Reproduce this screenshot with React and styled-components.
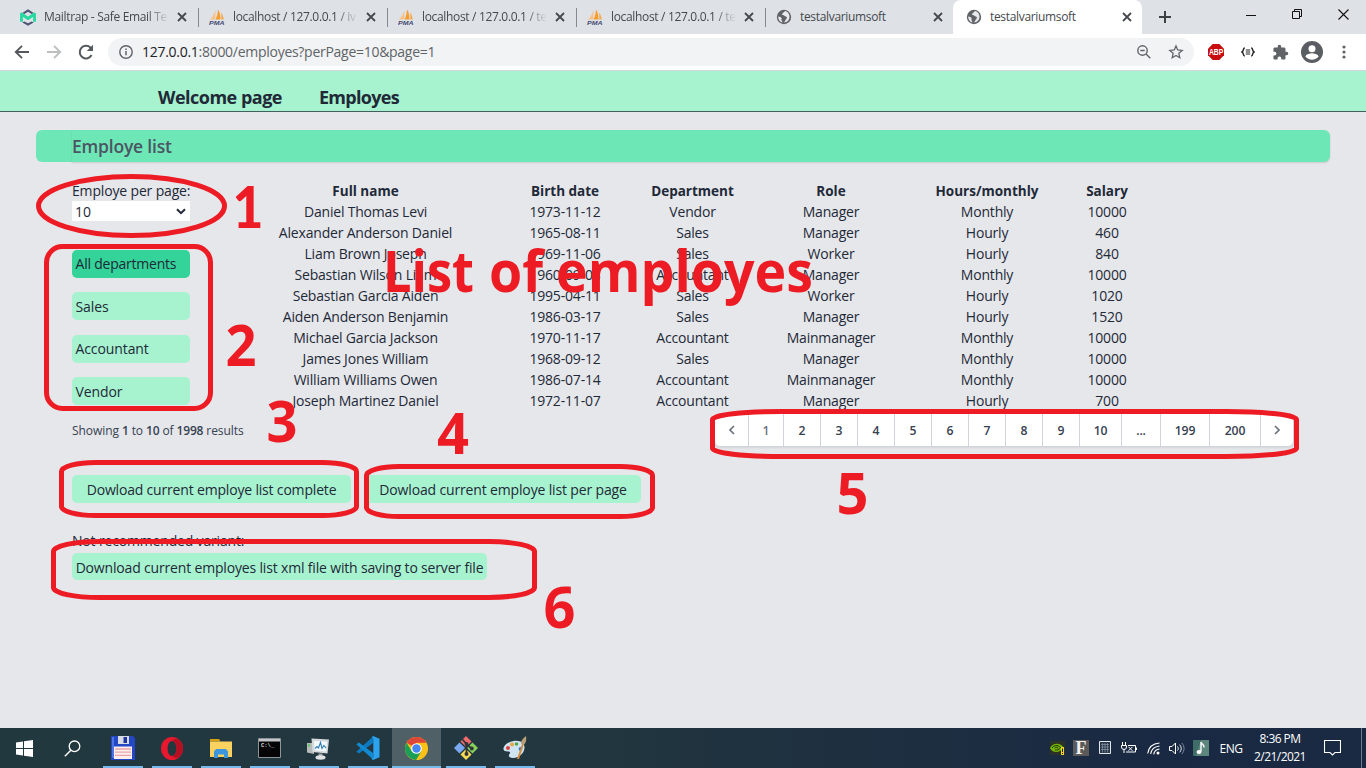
import React from 'react';
import styled, { createGlobalStyle, css } from 'styled-components';

const GlobalStyle = createGlobalStyle`
  * { box-sizing: border-box; }
  html, body { margin: 0; padding: 0; overflow: hidden; }
  body { font-family: "Open Sans", "Noto Sans", sans-serif; color: #1f2937; }
  svg { display: block; flex: none; }
`;

const Screen = styled.div`
  position: relative;
  width: 1366px;
  height: 768px;
  display: flex;
  flex-direction: column;
  overflow: hidden;
  background: #e5e7eb;
`;

/* ---------- browser chrome ---------- */
const TabStrip = styled.div`
  display: flex;
  flex: none;
  height: 34px;
  padding-left: 8px;
  background: #dee1e6;
`;

const Tab = styled.div`
  display: flex;
  align-items: center;
  width: 189px;
  height: 34px;
  padding: 0 8px 0 11px;
  color: #45494d;
  border-left: 1px solid transparent;
  ${p => p.$divided && css`
    background: linear-gradient(#85888c, #85888c) 0 8px / 1px 19px no-repeat;
  `}
  ${p => p.$active && css`
    padding-left: 12px;
    background: #fff;
    border-radius: 8px 8px 0 0;
  `}
`;

const TabTitle = styled.span`
  flex: 1;
  margin: 0 6px 0 8px;
  font-size: 12px;
  letter-spacing: -0.33px;
  line-height: 18px;
  white-space: nowrap;
  overflow: hidden;
  ${p => p.$fade && css`
    mask-image: linear-gradient(90deg, #000 calc(100% - 22px), transparent 100%);
  `}
`;

const NewTab = styled.div`
  display: flex;
  align-items: center;
  justify-content: center;
  width: 46px;
`;

const WindowControls = styled.div`
  display: flex;
  margin-left: auto;
  height: 29px;
`;

const WindowButton = styled.div`
  display: flex;
  align-items: center;
  justify-content: center;
  width: 46px;
`;

const Toolbar = styled.div`
  display: flex;
  align-items: center;
  flex: none;
  height: 37px;
  background: #fff;
  border-bottom: 1px solid #d5d8dc;
`;

const NavButtons = styled.div`
  display: flex;
  align-items: center;
  gap: 14px;
  width: 108px;
  padding-left: 13px;
`;

const AddressBar = styled.div`
  display: flex;
  align-items: center;
  width: 1086px;
  height: 28px;
  padding: 0 10px;
  border-radius: 14px;
  background: #f1f3f4;
`;

const Url = styled.span`
  flex: 1;
  margin-left: 8px;
  font-size: 14px;
  letter-spacing: -0.28px;
  line-height: 20px;
  color: #5f6368;
  b { font-weight: 400; color: #202124; }
`;

const AddressActions = styled.div`
  display: flex;
  align-items: center;
  gap: 16px;
`;

const Extensions = styled.div`
  display: flex;
  align-items: center;
  padding-left: 6px;
`;

const ExtensionSlot = styled.div`
  display: flex;
  align-items: center;
  justify-content: center;
  width: 32px;
`;

/* ---------- web page ---------- */
const SiteHeader = styled.nav`
  display: flex;
  flex: none;
  gap: 37px;
  height: 41px;
  padding: 14px 0 0 158px;
  background: #a7f3d0;
  border-bottom: 1px solid #42605f;
`;

const NavLink = styled.a`
  font-size: 18px;
  font-weight: 700;
  line-height: 25px;
  letter-spacing: ${p => p.$ls};
  color: #1f2937;
`;

const Page = styled.main`
  flex: 1;
  padding: 18px 36px 0;
`;

const TitleBar = styled.div`
  height: 32px;
  padding-left: 36px;
  border-radius: 6px;
  background: #6ee7b7;
`;

const Title = styled.h1`
  height: 32px;
  margin: 0;
  border-radius: 0 6px 6px 0;
  box-shadow: 0 1px 2px rgba(0, 0, 0, 0.12);
  font-size: 17.5px;
  font-weight: 600;
  line-height: 33px;
  letter-spacing: -0.2px;
  color: #4b5563;
`;

const Content = styled.div`
  display: flex;
  height: 230px;
  padding: 19px 0 0 36px;
`;

const Sidebar = styled.aside`
  width: 118px;
  margin-right: 51px;
`;

const FieldLabel = styled.div`
  height: 20px;
  font-size: 14px;
  line-height: 20px;
  letter-spacing: -0.16px;
  white-space: nowrap;
`;

const PerPage = styled.div`
  display: flex;
  align-items: center;
  justify-content: space-between;
  height: 20px;
  margin-bottom: 29px;
  padding: 1px 4px 0 3px;
  background: #fff;
  font-size: 14px;
  line-height: 20px;
`;

const Departments = styled.div`
  display: flex;
  flex-direction: column;
  gap: 14.33px;
`;

const Department = styled.button`
  height: 28px;
  padding: ${p => p.$drop}px 0 0 3.5px;
  border: 0;
  border-radius: 5px;
  background: ${p => (p.$selected ? '#34d399' : '#a7f3d0')};
  font: 14px/20px "Open Sans", sans-serif;
  letter-spacing: ${p => (p.$selected ? '-0.22px' : '-0.1px')};
  text-align: left;
  white-space: nowrap;
  color: #1f2937;
`;

const Table = styled.div`
  display: grid;
  grid-template-columns: 249px 150px 105px 172px 140px 100px;
  grid-auto-rows: 21px;
  align-content: start;
`;

const Cell = styled.div`
  text-align: center;
  font-size: ${p => (p.$head ? '13.5px' : '14px')};
  font-weight: ${p => (p.$head ? 700 : 400)};
  letter-spacing: ${p => (p.$head ? '0px' : '-0.19px')};
  line-height: ${p => (p.$head ? 21 : 19)}px;
  white-space: nowrap;
`;

const PagerRow = styled.div`
  display: flex;
  align-items: flex-start;
  justify-content: space-between;
  height: 34px;
  margin-top: 21px;
  padding: 0 36px;
`;

const Summary = styled.p`
  margin: 9px 0 0;
  font-size: 12px;
  line-height: 18px;
  letter-spacing: -0.07px;
  color: #374151;
  b { font-weight: 600; letter-spacing: -0.2px; }
`;

const Pager = styled.div`
  display: flex;
  height: 34px;
  border: 1px solid #d1d5db;
  border-radius: 6px;
  background: #fff;
  box-shadow: 0 1px 2px rgba(0, 0, 0, 0.08);
`;

const PageLink = styled.span`
  display: flex;
  align-items: center;
  justify-content: center;
  width: ${p => p.$w}px;
  border-right: 1px solid #d1d5db;
  font-size: 12.2px;
  font-weight: 600;
  letter-spacing: -0.2px;
  color: ${p => (p.$muted ? '#6b7280' : '#374151')};
  &:last-child { border-right: 0; }
`;

const Downloads = styled.div`
  display: flex;
  gap: 14px;
  padding: 28px 0 0 36px;
`;

const DownloadButton = styled.button`
  width: ${p => p.$w}px;
  height: ${p => p.$h || 28}px;
  padding: ${p => p.$drop || 1}px 0 0;
  border: 0;
  border-radius: 5px;
  background: #a7f3d0;
  font: 14px/20px "Open Sans", sans-serif;
  letter-spacing: ${p => p.$ls};
  text-align: center;
  white-space: nowrap;
  color: #1f2937;
`;

const Fallback = styled.section`
  padding: 28px 0 0 36px;
`;

const FallbackNote = styled.p`
  margin: 0 0 2px;
  font-size: 14px;
  line-height: 20px;
  letter-spacing: -0.17px;
`;

const Annotations = styled.svg`
  position: absolute;
  left: 0;
  top: 0;
  pointer-events: none;
`;

const Mark = styled.text`
  font-family: ${p => (p.$footed ? 'Lato, sans-serif' : '"Open Sans", sans-serif')};
  font-weight: ${p => (p.$footed ? 900 : 700)};
  font-size: 56.5px;
  fill: #ed1c24;
`;

/* ---------- taskbar ---------- */
const Taskbar = styled.footer`
  display: flex;
  flex: none;
  height: 40px;
  background: linear-gradient(90deg, #22383f 0%, #22373f 40%, #1d2f40 65%, #1a2943 85%, #1a2a42 100%);
`;

const TaskSlot = styled.div`
  display: flex;
  align-items: center;
  justify-content: center;
  width: 49px;
  height: 40px;
  padding-right: ${p => p.$nudge || 0}px;
  ${p => p.$running && css`
    background: linear-gradient(#76b9ed, #76b9ed) center bottom / 40px 2px no-repeat;
  `}
  ${p => p.$current && css`
    background: linear-gradient(#76b9ed, #76b9ed) left bottom / 100% 2px no-repeat, #4f6067;
  `}
`;

const Tray = styled.div`
  display: flex;
  align-items: center;
  margin-left: auto;
  color: #fff;
`;

const TraySlot = styled.div`
  display: flex;
  align-items: center;
  justify-content: center;
  width: ${p => p.$w || 24}px;
  height: 40px;
`;

const Language = styled(TraySlot)`
  font-size: 12px;
  letter-spacing: -0.55px;
`;

const Clock = styled.div`
  width: 62px;
  font-size: 12px;
  line-height: 18px;
  letter-spacing: -0.55px;
  text-align: center;
  white-space: nowrap;
`;

const Edge = styled.div`
  width: 5px;
  height: 40px;
  margin-left: 7px;
  border-left: 1px solid #6f7c8c;
`;

const LetterTile = styled.span`
  width: 16px;
  height: 16px;
  background: #5a5a5a;
  color: #f0f0f0;
  font: 700 18px/16px "Liberation Serif", serif;
  text-align: center;
`;

/* ---------- icons ---------- */
const MailtrapIcon = () => (
  <svg width="16" height="17" viewBox="0 0 16 17">
    <path d="M2.300 4 8 .3 13.700 4l-2 1L8 2.800 4.300 5z M2.300 13.400 8 16.700l5.700-3.300-2-1L8 14.200l-3.700-1.800z" fill="#4b5573" />
    <path d="M1.500 12.800V5l6.500 4.500L14.500 5v7.800" fill="none" stroke="#22d9a0" strokeWidth="2.800" strokeLinejoin="round" />
  </svg>
);

const PmaIcon = () => (
  <svg width="16" height="17" viewBox="0 0 16 17">
    <path d="M6.600 1 6.200 10.500H.8C3.500 8.500 5.200 5 6.600 1z" fill="#f6c28a" />
    <path d="M9 .5c2 3 2.600 6.500 2.400 10H6.600C8 7.500 8.800 4 9 .5z" fill="#f89c2c" />
    <path d="M12 3.500c1.600 2 2.600 4.500 2.800 7h-2.600c.3-2.300.2-4.700-.2-7z" fill="#f7a94b" />
    <text x="0" y="16.300" fontFamily="Liberation Sans" fontSize="6.200" fontWeight="700" fontStyle="italic" fill="#444a73" textLength="15.500" lengthAdjust="spacingAndGlyphs">PMA</text>
  </svg>
);

const GlobeIcon = () => (
  <svg width="16" height="16" viewBox="0 0 16 16">
    <circle cx="8" cy="8" r="7.200" fill="#5f6368" />
    <path d="M9.200 2.100c-.4.900-1.800.7-1.900 1.700-.1.900-1.600.7-1.500 1.700.2.900 2 .3 2.600 1.200.7 1 2.300.5 2.500 1.800.2 1.400-1.300 1.500-1.500 2.700-.2 1.100-1.100 1.700-1.900 2.300 4-.1 6-2.700 6-5.700 0-2.700-1.800-5-4.300-5.700z M2.200 7.200c1 .7 2.700.6 3.300 1.700.4 1-.5 1.500 0 2.400.3.700 1 1.100.8 2.100C3.800 12.700 2 10.500 2.200 7.200z" fill="#e7e9ec" />
  </svg>
);

const CloseIcon = () => (
  <svg width="14" height="14" viewBox="0 0 14 14">
    <path d="m3 3 8 8M11 3l-8 8" stroke="#45494d" strokeWidth="1.800" />
  </svg>
);

const PlusIcon = () => (
  <svg width="14" height="14" viewBox="0 0 14 14"><path d="M7 1v12M1 7h12" stroke="#3c4043" strokeWidth="2" /></svg>
);

const MinimizeIcon = () => (
  <svg width="10" height="10" viewBox="0 0 10 10"><path d="M0 5.500h10" stroke="#111" /></svg>
);

const RestoreIcon = () => (
  <svg width="11" height="11" viewBox="0 0 11 11"><path d="M.5 2.500h7v7h-7zM2.500 2.500v-2h7v7h-2" fill="none" stroke="#111" /></svg>
);

const WinCloseIcon = () => (
  <svg width="11" height="11" viewBox="0 0 11 11"><path d="m.5.5 10 10M10.500.5l-10 10" stroke="#111" strokeWidth="1.100" /></svg>
);

const ArrowIcon = ({ forward }) => (
  <svg width="18" height="18" viewBox="0 0 18 18">
    <path d={forward ? 'M2 9h13M9 2.800 15.200 9 9 15.200' : 'M16 9H3M9 2.800 2.800 9 9 15.200'} fill="none" stroke={forward ? '#bcbec0' : '#55595e'} strokeWidth="1.900" />
  </svg>
);

const ReloadIcon = () => (
  <svg width="18" height="18" viewBox="0 0 18 18">
    <path d="M14.600 12.100A6.300 6.300 0 1 1 13.400 4.500L15 6" fill="none" stroke="#55595e" strokeWidth="2" />
    <path d="M16 1.800v6.200H9.800z" fill="#55595e" />
  </svg>
);

const InfoIcon = () => (
  <svg width="16" height="16" viewBox="0 0 16 16">
    <circle cx="8" cy="8" r="6.200" fill="none" stroke="#5f6368" strokeWidth="1.400" />
    <path d="M8 7v4.300M8 4.500V6" stroke="#5f6368" strokeWidth="1.500" />
  </svg>
);

const ZoomOutIcon = () => (
  <svg width="16" height="16" viewBox="0 0 16 16">
    <circle cx="6.500" cy="6.500" r="4.700" fill="none" stroke="#5f6368" strokeWidth="1.400" />
    <path d="m10 10 4.300 4.300M4.300 6.500h4.400" stroke="#5f6368" strokeWidth="1.400" />
  </svg>
);

const StarIcon = () => (
  <svg width="16" height="16" viewBox="0 0 16 16">
    <path d="m8 1.900 1.700 4.100 4.500.4-3.400 2.900 1 4.400L8 11.400l-3.800 2.300 1-4.400L1.800 6.400l4.500-.4z" fill="none" stroke="#5f6368" strokeWidth="1.300" />
  </svg>
);

const AbpIcon = () => (
  <svg width="16" height="16" viewBox="0 0 16 16">
    <path d="M4.700 0h6.600L16 4.700v6.600L11.300 16H4.700L0 11.300V4.700z" fill="#c70d0d" />
    <text x=".9" y="11" fontFamily="Liberation Sans" fontSize="8.600" fontWeight="700" fill="#fff" textLength="14.400" lengthAdjust="spacingAndGlyphs">ABP</text>
  </svg>
);

const BracesIcon = () => (
  <svg width="14" height="10" viewBox="0 0 14 10">
    <path d="M3.800 1C1.600 1 3 4.400 1 5c2 .6.6 4 2.800 4M10.200 1c2.200 0 .8 3.400 2.800 4-2 .6-.6 4-2.800 4" fill="none" stroke="#222" strokeWidth="1.500" />
    <path d="M4.800 3h4.400M4.800 5h4.400M4.800 7h4.400" stroke="#222" strokeWidth="1" />
  </svg>
);

const PuzzleIcon = () => (
  <svg width="17" height="17" viewBox="0 0 24 24">
    <path d="M20.500 11H19V7c0-1.100-.9-2-2-2h-4V3.500a2.500 2.500 0 0 0-5 0V5H4c-1.100 0-2 .9-2 2v3.800h1.500a2.700 2.700 0 0 1 0 5.400H2V20c0 1.100.9 2 2 2h3.800v-1.500a2.700 2.700 0 0 1 5.400 0V22H17c1.100 0 2-.9 2-2v-4h1.500a2.500 2.500 0 0 0 0-5z" fill="#5f6368" />
  </svg>
);

const ProfileIcon = () => (
  <svg width="22" height="22" viewBox="0 0 22 22">
    <circle cx="11" cy="11" r="11" fill="#5a5e63" />
    <circle cx="11" cy="7.700" r="3.500" fill="#fff" />
    <path d="M4.300 15.200c1.400-2.200 4.500-3 6.700-3s5.300.8 6.700 3a8 8 0 0 1-13.400 0z" fill="#fff" />
  </svg>
);

const MenuIcon = () => (
  <svg width="4" height="14" viewBox="0 0 4 14" fill="#5f6368">
    <circle cx="2" cy="2" r="1.600" /><circle cx="2" cy="7" r="1.600" /><circle cx="2" cy="12" r="1.600" />
  </svg>
);

const SelectArrow = () => (
  <svg width="10" height="7" viewBox="0 0 10 7"><path d="m1 1.200 4 4 4-4" fill="none" stroke="#1f2937" strokeWidth="2" /></svg>
);

const Chevron = ({ right }) => (
  <svg width="8" height="10" viewBox="0 0 8 10">
    <path d={right ? 'm2 1 4 4-4 4' : 'M6 1 2 5l4 4'} fill="none" stroke="#6b7280" strokeWidth="1.700" />
  </svg>
);

const WindowsIcon = () => (
  <svg width="17" height="17" viewBox="0 0 17 17" fill="#fff">
    <path d="M0 2.500 7 1.500V8H0zM8 1.300 17 0v8H8zM0 9h7v6.500l-7-1zM8 9h9v8l-9-1.300z" />
  </svg>
);

const SearchIcon = () => (
  <svg width="17" height="17" viewBox="0 0 17 17">
    <circle cx="10.500" cy="6.300" r="5.300" fill="none" stroke="#fff" strokeWidth="1.300" />
    <path d="m6.800 10.200-6 6" stroke="#fff" strokeWidth="1.400" />
  </svg>
);

const FloppyIcon = () => (
  <svg width="24" height="24" viewBox="0 0 24 24">
    <path d="M0 0h22l2 2v22H0z" fill="#2347c5" />
    <path d="M1 1h2v21H1z" fill="#4c74e4" />
    <path d="M7 0h11v8H7z" fill="#d9dce2" />
    <path d="M12.500 1H16v6h-3.500z" fill="#2038a0" />
    <path d="M3 10.500h18V23H3z" fill="#fdeeee" />
    <path d="M4 13h16M4 16.200h16M4 19.400h16" stroke="#e9a5aa" strokeWidth="1.300" />
  </svg>
);

const OperaIcon = () => (
  <svg width="22" height="23" viewBox="0 0 22 23">
    <path fillRule="evenodd" d="M11 0a11 11.500 0 1 0 0 23 11 11.500 0 0 0 0-23zm0 4c2.600 0 4.400 3.300 4.400 7.500S13.600 19 11 19s-4.400-3.300-4.400-7.500S8.400 4 11 4z" fill="#e8192f" />
    <path d="M11 4c2.600 0 4.400 3.300 4.400 7.500S13.600 19 11 19c3 2.500 5.500 2.300 7.800.6A11 11.500 0 0 0 18.600 3.200C15.900 1.500 13.500 1.700 11 4z" fill="#b51022" />
  </svg>
);

const FolderIcon = () => (
  <svg width="22" height="19" viewBox="0 0 22 19">
    <path d="M0 0h9l1.500 2.500H0z" fill="#d9a014" />
    <path d="M0 2.500h22V18H0z" fill="#fbd260" />
    <path d="M4 19v-6.500L6 10h10l2 2.500V19h-4v-3.500H8V19z" fill="#3b97dd" />
  </svg>
);

const TerminalIcon = () => (
  <svg width="23" height="20" viewBox="0 0 23 20">
    <path d="M.5.5h22v19H.5z" fill="#050505" stroke="#8e9498" />
    <path d="M1 1h21v2.500H1z" fill="#c3c7ca" />
    <text x="3" y="9.300" fontFamily="Liberation Mono" fontSize="5.500" fontWeight="700" fill="#ddd">C:\_</text>
  </svg>
);

const MonitorIcon = () => (
  <svg width="23" height="23" viewBox="0 0 23 23">
    <path d="M0 6h7v11l-7-1.500z" fill="#b6babb" />
    <path d="M1 7.500h2v2H1z" fill="#4cc94c" />
    <path d="M4.500 1.500 22 2.500l-1.500 14L5.500 15z" fill="#d5d9dc" />
    <path d="M7 4l13 .8-1 9.700L7.500 13.300z" fill="#f4fbff" />
    <path d="m8 11.500 2-2 1.500 1.500 2-5.500 1.500 6 2-3 2 2.500" fill="none" stroke="#2a7db5" strokeWidth="1.100" />
    <path d="M11.500 16.500h4v2.500h-4z" fill="#9ea4a8" />
    <ellipse cx="13.500" cy="20.500" rx="5" ry="2.200" fill="#e0e2e3" />
  </svg>
);

const CodeIcon = () => (
  <svg width="24" height="24" viewBox="0 0 24 24">
    <path d="M.3 15.800 17 .4V7L3 17.600z" fill="#0d79bf" />
    <path d="M.3 8.200 17 23.600V17L3 6.400z" fill="#1389d1" />
    <path d="M17 0l6.500 2.800v18.400L17 24l-1.500-1.200 1.800-1V2.500l-1.500-1.200z" fill="#2ca3ee" />
  </svg>
);

const ChromeIcon = () => (
  <svg width="23" height="23" viewBox="0 0 24 24">
    <circle cx="12" cy="12" r="12" fill="#fbc116" />
    <path d="M12 12 1.600 6A12 12 0 0 1 22.400 6H12z" fill="#de4638" />
    <path d="M1.600 6a12 12 0 0 0 10 18l5.500-9.300L7 14.900z" fill="#1a9f56" />
    <circle cx="12" cy="12" r="5.600" fill="#fff" />
    <circle cx="12" cy="12" r="4.400" fill="#4486f4" />
  </svg>
);

const GitIcon = () => (
  <svg width="24" height="24" viewBox="0 0 24 24">
    <path d="m12 0 5.500 5.500L12 11 6.500 5.500z" fill="#ee6b6b" />
    <path d="M5.500 6.500 11 12l-5.500 5.500L0 12z" fill="#7aa9f2" />
    <path d="M18.500 6.500 24 12l-5.500 5.500L13 12z" fill="#86d25a" />
    <path d="m12 13 5.500 5.500L12 24l-5.500-5.500z" fill="#fbdc55" />
    <path d="M8.500 3.500 12.500 8v9.500M12.500 8l5 4.500" fill="none" stroke="#2f3336" strokeWidth="1.800" />
    <circle cx="12.500" cy="8" r="1.900" fill="#2f3336" /><circle cx="12.500" cy="18" r="2" fill="#2f3336" /><circle cx="17.800" cy="12.500" r="1.900" fill="#2f3336" />
  </svg>
);

const PaintIcon = () => (
  <svg width="24" height="24" viewBox="0 0 24 24">
    <path d="M10.500 5C17 3.500 22 7 21.500 12c-.5 5.500-5.500 10-11.500 10-4 0-5-2.500-3.500-4 1.300-1.400.3-2.500-1.500-2.500-3 0-5-1-4.500-3.500C1.200 8.500 5.500 6 10.500 5z" fill="#cfe4f3" />
    <circle cx="5" cy="12" r="2" fill="#d94141" /><circle cx="9" cy="8.500" r="1.900" fill="#e9a33b" />
    <circle cx="13.500" cy="8" r="1.800" fill="#53a84f" /><circle cx="17.500" cy="13" r="1.900" fill="#3e76c9" />
    <path d="m14 23 5-15 1.800.6L16 23z" fill="#d98b3a" />
    <path d="M18 7.500C18 4 20 2.500 23 0c.6 3.500.3 6.500-2.200 9z" fill="#b99e78" />
  </svg>
);

const NvidiaIcon = () => (
  <svg width="16" height="16" viewBox="0 0 16 16">
    <path d="M1 1h15v14H1z" fill="#2b3328" />
    <path d="M1 8c2-3.500 5.500-4.600 8.500-4 2.500.4 4 2 5 3.500-2 3-5 4.800-8 4.500C4 11.700 2 10 1 8z" fill="#76b900" />
    <path d="M3 8c2-2.500 4.500-3 6.500-2 1 .5 1.500 1 2 1.700C10 9.500 8 10.500 6 10M5.500 8.300c1-1.200 2.500-1.200 3.500-.2" fill="none" stroke="#1d2c10" strokeWidth="1" />
    <path d="M12 7h3v8h-3z" fill="#f2d224" />
    <path d="M13.500 8.500v3.500M13.500 13v1" stroke="#222" />
  </svg>
);

const GridIcon = () => (
  <svg width="12" height="14" viewBox="0 0 12 14">
    <path d="M.5.5h11v12H.5z" fill="#26374b" stroke="#e4e7ea" />
    <path d="M3.500 2v9.500M6 2v9.500M8.500 2v9.500M2 3.500h8M2 6h8M2 8.500h8" stroke="#8996a5" strokeWidth=".7" />
  </svg>
);

const BatteryIcon = () => (
  <svg width="16" height="12" viewBox="0 0 16 12" fill="none" stroke="#fff">
    <path d="M1.500 0v3M4.500 0v3M.5 3.500h5v1.500a2.500 2.500 0 0 1-5 0zM3 7.500V11" />
    <path d="M7 3.500h7.500v6.500H5M15.500 5.500v2.500M7.500 4.800l4 4M11.500 4.800l-4 4" />
  </svg>
);

const WifiIcon = () => (
  <svg width="13" height="13" viewBox="0 0 13 13" fill="none" stroke="#fff">
    <path d="M.7 11.500C1.500 5.500 6 1.500 12.500 1M3.700 12C4.300 7.500 7.500 4.600 12.500 4M6.700 12.300c.5-3 2.500-5 5.800-5.300" strokeWidth="1.100" />
    <circle cx="11" cy="11" r="1.500" fill="#fff" stroke="none" />
  </svg>
);

const SpeakerIcon = () => (
  <svg width="16" height="13" viewBox="0 0 16 13" fill="none" stroke="#fff">
    <path d="M.5 4.500h2.500L6.500 1v11L3 8.500H.5z" />
    <path d="M8.500 4.500c1 1.200 1 2.800 0 4M10.700 2.700c2 2.200 2 5.400 0 7.600" />
    <path d="M12.800 1c3 3.200 3 7.800 0 11" stroke="#7d8a9a" />
  </svg>
);

const MusicIcon = () => (
  <svg width="16" height="16" viewBox="0 0 16 16">
    <path d="M0 0h16v16H0z" fill="#3f6d68" /><path d="M8 0h8v16H3z" fill="#5d877d" />
    <path d="M8 2v9.500M8 2c.5 2.500 3.500 2.500 3 5.500" fill="none" stroke="#fff" strokeWidth="1.400" />
    <ellipse cx="6" cy="12" rx="2.500" ry="2" fill="#fff" />
  </svg>
);

const NotificationIcon = () => (
  <svg width="17" height="16" viewBox="0 0 17 16"><path d="M.5.500h16v12h-5.500L8.500 15 6 12.500H.5z" fill="none" stroke="#fff" strokeWidth="1.100" /></svg>
);

/* ---------- data ---------- */
const tabs = [
  { title: 'Mailtrap - Safe Email Te', icon: MailtrapIcon, fade: true },
  { title: 'localhost / 127.0.0.1 / iv', icon: PmaIcon, fade: true },
  { title: 'localhost / 127.0.0.1 / te', icon: PmaIcon, fade: true },
  { title: 'localhost / 127.0.0.1 / te', icon: PmaIcon, fade: true },
  { title: 'testalvariumsoft', icon: GlobeIcon },
  { title: 'testalvariumsoft', icon: GlobeIcon, active: true },
];

const columns = ['Full name', 'Birth date', 'Department', 'Role', 'Hours/monthly', 'Salary'];

const employees = [
  ['Daniel Thomas Levi', '1973-11-12', 'Vendor', 'Manager', 'Monthly', '10000'],
  ['Alexander Anderson Daniel', '1965-08-11', 'Sales', 'Manager', 'Hourly', '460'],
  ['Liam Brown Joseph', '1969-11-06', 'Sales', 'Worker', 'Hourly', '840'],
  ['Sebastian Wilson Liam', '1960-09-08', 'Accountant', 'Manager', 'Monthly', '10000'],
  ['Sebastian Garcia Aiden', '1995-04-11', 'Sales', 'Worker', 'Hourly', '1020'],
  ['Aiden Anderson Benjamin', '1986-03-17', 'Sales', 'Manager', 'Hourly', '1520'],
  ['Michael Garcia Jackson', '1970-11-17', 'Accountant', 'Mainmanager', 'Monthly', '10000'],
  ['James Jones William', '1968-09-12', 'Sales', 'Manager', 'Monthly', '10000'],
  ['William Williams Owen', '1986-07-14', 'Accountant', 'Mainmanager', 'Monthly', '10000'],
  ['Joseph Martinez Daniel', '1972-11-07', 'Accountant', 'Manager', 'Hourly', '700'],
];

const pages = [
  ['1', 35], ['2', 37], ['3', 37], ['4', 37], ['5', 37], ['6', 37], ['7', 37],
  ['8', 37], ['9', 37], ['10', 42], ['...', 39], ['199', 49], ['200', 51],
];

const tasks = [FloppyIcon, OperaIcon, FolderIcon, TerminalIcon, MonitorIcon, CodeIcon, ChromeIcon, GitIcon, PaintIcon];

/* text, x, baseline, advance width */
const marks = [
  ['1', 232.500, 228, 31], ['2', 225.500, 366, 31], ['3', 266.500, 442, 31], ['4', 437, 454, 32],
  ['5', 836.500, 514, 32], ['6', 543.500, 628, 32],
  ['List', 383, 292, 91], ['of', 489, 292, 54], ['employes', 556, 292, 257],
];

/* A hand-drawn frame: straight edges with flattened elliptical corners. */
const Frame = ({ x, y, w, h, rx, ry }) => (
  <rect x={x + 2.500} y={y + 2.500} width={w - 5} height={h - 5} rx={rx} ry={ry} />
);

export default function App() {
  return (
    <Screen>
      <GlobalStyle />
      <TabStrip>
        {tabs.map((t, i) => (
          <Tab key={i} $active={t.active} $divided={i > 0 && !t.active}>
            <t.icon />
            <TabTitle $fade={t.fade}>{t.title}</TabTitle>
            <CloseIcon />
          </Tab>
        ))}
        <NewTab><PlusIcon /></NewTab>
        <WindowControls>
          <WindowButton><MinimizeIcon /></WindowButton>
          <WindowButton><RestoreIcon /></WindowButton>
          <WindowButton><WinCloseIcon /></WindowButton>
        </WindowControls>
      </TabStrip>
      <Toolbar>
        <NavButtons><ArrowIcon /><ArrowIcon forward /><ReloadIcon /></NavButtons>
        <AddressBar>
          <InfoIcon />
          <Url><b>127.0.0.1</b>:8000/employes?perPage=10&amp;page=1</Url>
          <AddressActions><ZoomOutIcon /><StarIcon /></AddressActions>
        </AddressBar>
        <Extensions>
          <ExtensionSlot><AbpIcon /></ExtensionSlot>
          <ExtensionSlot><BracesIcon /></ExtensionSlot>
          <ExtensionSlot><PuzzleIcon /></ExtensionSlot>
          <ExtensionSlot><ProfileIcon /></ExtensionSlot>
          <ExtensionSlot><MenuIcon /></ExtensionSlot>
        </Extensions>
      </Toolbar>

      <SiteHeader>
        <NavLink $ls="-0.5px">Welcome page</NavLink>
        <NavLink $ls="-0.7px">Employes</NavLink>
      </SiteHeader>
      <Page>
        <TitleBar><Title>Employe list</Title></TitleBar>
        <Content>
          <Sidebar>
            <FieldLabel>Employe per page:</FieldLabel>
            <PerPage>10<SelectArrow /></PerPage>
            <Departments>
              <Department $selected $drop={0}>All departments</Department>
              <Department $drop={1}>Sales</Department>
              <Department $drop={1}>Accountant</Department>
              <Department $drop={2}>Vendor</Department>
            </Departments>
          </Sidebar>
          <Table>
            {columns.map(c => <Cell key={c} $head>{c}</Cell>)}
            {employees.flatMap((row, r) => row.map((v, c) => <Cell key={`${r}-${c}`}>{v}</Cell>))}
          </Table>
        </Content>
        <PagerRow>
          <Summary>Showing <b>1</b> to <b>10</b> of <b>1998</b> results</Summary>
          <Pager>
            <PageLink $w={34} $muted><Chevron /></PageLink>
            {pages.map(([label, w], i) => <PageLink key={label} $w={w} $muted={i === 0}>{label}</PageLink>)}
            <PageLink $w={32} $muted><Chevron right /></PageLink>
          </Pager>
        </PagerRow>
        <Downloads>
          <DownloadButton $w={279} $ls="-0.18px">Dowload current employe list complete</DownloadButton>
          <DownloadButton $w={276} $ls="-0.15px">Dowload current employe list per page</DownloadButton>
        </Downloads>
        <Fallback>
          <FallbackNote>Not recommended variant:</FallbackNote>
          <DownloadButton $w={415} $h={27} $drop={3} $ls="-0.17px">Download current employes list xml file with saving to server file</DownloadButton>
        </Fallback>
      </Page>

      <Taskbar>
        <TaskSlot $nudge={1}><WindowsIcon /></TaskSlot>
        <TaskSlot $nudge={3}><SearchIcon /></TaskSlot>
        {tasks.map((Icon, i) => <TaskSlot key={i} $running $current={Icon === ChromeIcon}><Icon /></TaskSlot>)}
        <Tray>
          <TraySlot><NvidiaIcon /></TraySlot>
          <TraySlot><LetterTile>F</LetterTile></TraySlot>
          <TraySlot><GridIcon /></TraySlot>
          <TraySlot><BatteryIcon /></TraySlot>
          <TraySlot><WifiIcon /></TraySlot>
          <TraySlot><SpeakerIcon /></TraySlot>
          <TraySlot><MusicIcon /></TraySlot>
          <Language $w={36}>ENG</Language>
          <Clock>8:36 PM<br />2/21/2021</Clock>
          <TraySlot $w={43}><NotificationIcon /></TraySlot>
          <Edge />
        </Tray>
      </Taskbar>

      <Annotations width="1366" height="768" viewBox="0 0 1366 768">
        <g fill="none" stroke="#ed1c24" strokeWidth="5">
          <ellipse cx="131.500" cy="206" rx="93" ry="29.500" />
          <Frame x={44} y={244} w={169} h={167} rx={16} ry={16} />
          <Frame x={59} y={460} w={300} h={58} rx={34} ry={9} />
          <Frame x={364} y={464} w={291} h={55} rx={32} ry={9} />
          <Frame x={710} y={409} w={589} h={50} rx={70} ry={8} />
          <Frame x={51} y={539} w={486} h={61} rx={46} ry={10} />
        </g>
        {marks.map(([label, x, y, w]) => (
          <Mark key={label} x={x} y={y} textLength={w} lengthAdjust="spacingAndGlyphs" $footed={label === '1'}>{label}</Mark>
        ))}
      </Annotations>
    </Screen>
  );
}
